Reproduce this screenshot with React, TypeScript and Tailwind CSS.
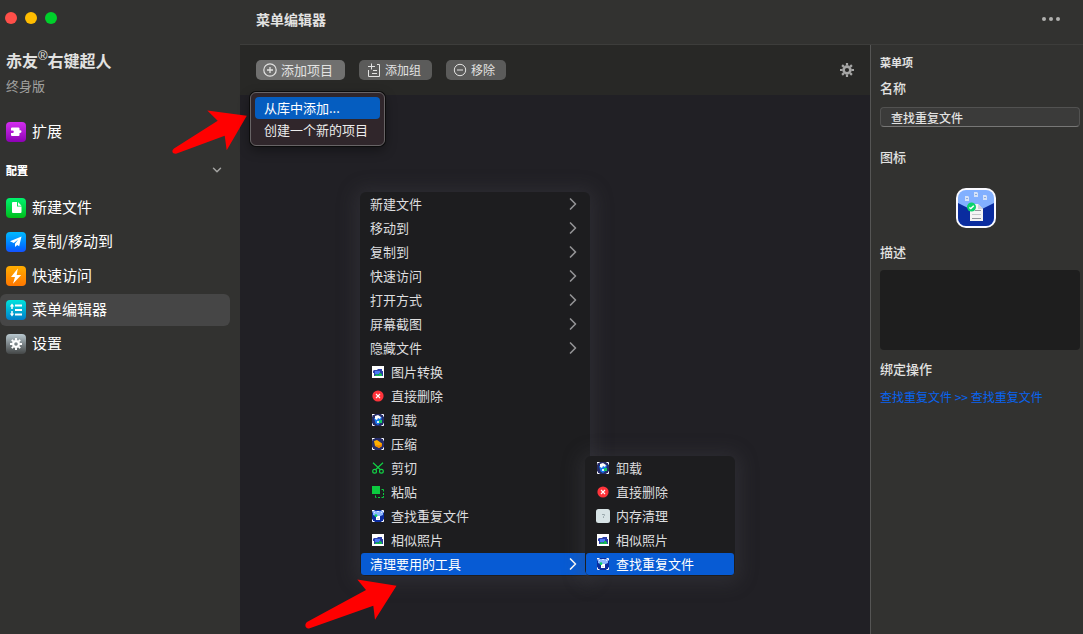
import { ReactNode } from 'react';
import { clsx } from 'clsx';
import { ChevronDown, ChevronRight } from 'lucide-react';

function GearIcon({ className }: { className: string }) {
  return (
    <svg viewBox="0 0 14 14" className={className} fill="none" stroke="currentColor">
      <circle cx="7" cy="7" r="3.4" strokeWidth="2.6" />
      <path
        strokeWidth="2.2"
        d="M7 0v2.6M7 11.4V14M0 7h2.6M11.4 7H14M2.1 2.1l1.8 1.8M10.1 10.1l1.8 1.8M2.1 11.9l1.8-1.8M10.1 3.9l1.8-1.8"
      />
    </svg>
  );
}

function PuzzleIcon() {
  return (
    <svg viewBox="0 0 20 20" className="size-5">
      <path
        fill="#fff"
        d="M6 5.5h6.5a1 1 0 0 1 1 1v1.7h.6a1.4 1.4 0 1 1 0 2.8h-.6v2a1 1 0 0 1-1 1H6a1 1 0 0 1-1-1v-2h1.5a1.2 1.2 0 0 0 0-2.6H5V6.5a1 1 0 0 1 1-1z"
      />
    </svg>
  );
}

function FileIcon() {
  return (
    <svg viewBox="0 0 20 20" className="size-5">
      <path fill="#fff" d="M7 4h4v4.5h4.5V14a1 1 0 0 1-1 1H7a1 1 0 0 1-1-1V5a1 1 0 0 1 1-1z" />
      <path fill="#fff" d="M12 4l3.5 3.7H12z" />
    </svg>
  );
}

function PlaneIcon() {
  return (
    <svg viewBox="0 0 20 20" className="size-5">
      <path fill="#fff" d="M15.5 4.5L4 9.3l3.8 1.6 4.4-3.4-3.2 4.3V15l2.2-2 2 1.2z" />
    </svg>
  );
}

function BoltIcon() {
  return (
    <svg viewBox="0 0 20 20" className="size-5">
      <path fill="#fff" d="M11.8 2.5L5 11h4l-2 6.8L15.2 9h-4.5z" />
    </svg>
  );
}

function ListIcon() {
  return (
    <svg viewBox="0 0 20 20" className="size-5" fill="none" stroke="#fff">
      <path strokeWidth="2" d="M9 5.5h7M9 10h7M9 14.5h7" />
      <path strokeWidth="1.5" d="M6 5v4M6 11v4" />
      <path fill="#fff" stroke="none" d="M6 3.6L8.2 6.6H3.8zM6 16.4l2.2-3H3.8z" />
    </svg>
  );
}

function SparkImage({ children, bg = '#262c68' }: { children: ReactNode; bg?: string }) {
  return (
    <svg viewBox="0 0 12 12" className="size-3">
      <rect width="12" height="12" fill={bg} />
      <path fill="none" stroke="#fff" d="M0 2.5V.5h2.5M9.5.5h2v2M11.5 9.5v2h-2M2.5 11.5h-2v-2" />
      {children}
    </svg>
  );
}

function PhotoIcon() {
  return (
    <svg viewBox="0 0 12 12" className="size-3">
      <rect width="12" height="12" fill="#fff" />
      <path fill="#2c3fa8" d="M1 5l1-1h3l1-1h4v2h1v5H2V7H1z" />
      <path fill="#4a78f5" d="M3 5h5v3H3z" />
      <path fill="#16b957" d="M3 10V9l2-1 2 1V7h2v1h1v2z" />
    </svg>
  );
}

function DeleteIcon() {
  return (
    <svg viewBox="0 0 12 12" className="size-3">
      <circle cx="6" cy="6" r="5.6" fill="#ff343b" />
      <path stroke="#fff" strokeWidth="1.1" d="M4 4l4 4M8 4L4 8" />
    </svg>
  );
}

function UninstallIcon() {
  return (
    <SparkImage>
      <path fill="#1677ee" d="M2 4l8-1-1.5 6L6 11 3.5 9.5z" />
      <path fill="#fff" d="M3 2l3-1 3 2-1 2-2-1-1 2-2-1z" />
      <path fill="#16c965" d="M7 6h3v3H7z" />
      <path fill="#d9f1ff" d="M5 7h2v2H5z" />
    </SparkImage>
  );
}

function ZipIcon() {
  return (
    <SparkImage>
      <path fill="#ffb000" d="M2 3l3-1 5 3.5V8L7 10 3 8z" />
      <path fill="#f28500" d="M3 7l4 3 3-2V6L7 7.5z" />
    </SparkImage>
  );
}

function CutIcon() {
  return (
    <svg viewBox="0 0 12 12" className="size-3" fill="none" stroke="#12cf45" strokeWidth="1.2">
      <path d="M1 .7l7.5 7M11 .7l-7.5 7" />
      <circle cx="2.6" cy="9.2" r="1.9" />
      <circle cx="9.4" cy="9.2" r="1.9" />
    </svg>
  );
}

function PasteIcon() {
  return (
    <svg viewBox="0 0 12 12" className="size-3">
      <rect width="8" height="8" fill="#0ccb3f" />
      <path
        fill="none"
        stroke="#0ccb3f"
        d="M9.5 3.5h2v2M11.5 7v2M11.5 10v1.5h-2M8 11.5H6M4.5 11.5h-1v-2"
      />
    </svg>
  );
}

function DuplicateIcon() {
  return (
    <SparkImage bg="#0b2c9f">
      <path fill="#8bb6ff" d="M1 1h10v4L6 7 1 5z" />
      <path fill="#fff" d="M4 6h4v4H4z" />
      <path fill="#dce8ff" d="M2 2h1v1H2zM5 1h2v1H5zM9 2h1v1H9z" />
      <circle cx="4" cy="5.7" r="1.4" fill="#10d26a" />
      <path fill="#abc" d="M5 8h2v.6H5z" />
    </SparkImage>
  );
}

function MemoryIcon() {
  return (
    <svg viewBox="0 0 14 14" className="-mx-px size-3.5">
      <rect width="14" height="14" rx="2.5" fill="#d7e3e5" />
      <path fill="none" stroke="#9aa9ad" d="M6 5.5h2.5v1L7.5 7.5V9" />
    </svg>
  );
}

function AppIcon() {
  return (
    <svg viewBox="0 0 40 40" className="size-10">
      <defs>
        <clipPath id="app-face">
          <rect x="2" y="2" width="36" height="36" rx="8" />
        </clipPath>
      </defs>
      <rect width="40" height="40" rx="10" fill="#fafaff" />
      <g clipPath="url(#app-face)">
        <rect x="2" y="2" width="36" height="36" fill="#82b0ff" />
        <path fill="#0a2c9f" d="M2 15l18 9 18-9v23H2z" />
        <path fill="#d5e2f8" d="M9 8h3l1 1v4H9zM18 4h3l1 1v4h-4zM27 7h3l1 1v4h-4z" />
        <path fill="#8fabd9" d="M10 10h2v1h-2zM19 6h2v1h-2zM28 9h2v1h-2z" />
        <path fill="#f4f4f4" d="M14 16h8l5 5v12H14z" />
        <path fill="#cfd3da" d="M22 16l5 5h-5z" />
        <path stroke="#8f9399" d="M19 22.5h6M16 30.5h9" />
        <path stroke="#c5c8cc" d="M16 26.5h9" />
        <circle cx="15.5" cy="19" r="4.5" fill="#0bd46c" />
        <path fill="none" stroke="#fff" strokeWidth="1.5" d="M13.3 19.5l1.5 1 3-2.8" />
      </g>
    </svg>
  );
}

function PlusCircleIcon() {
  return (
    <svg viewBox="0 0 14 14" className="size-3.5" fill="none" stroke="currentColor">
      <circle cx="7" cy="7" r="6.2" strokeWidth="1.2" />
      <path strokeWidth="1.3" d="M7 4v6M4 7h6" />
    </svg>
  );
}

function MinusCircleIcon() {
  return (
    <svg viewBox="0 0 14 14" className="size-3.5" fill="none" stroke="currentColor">
      <circle cx="7" cy="7" r="5.7" />
      <path d="M4 7h6" />
    </svg>
  );
}

function AddGroupIcon() {
  return (
    <svg viewBox="0 0 14 14" className="size-3.5" fill="none" stroke="currentColor">
      <path d="M4.5.5v6M1 3.5h7M1.5 7v6.5h11v-12H10" />
      <path d="M6 7.5h4M5 10.5h5" />
    </svg>
  );
}

const NAV = [
  { label: '新建文件', icon: <FileIcon />, color: 'from-[#00f36d] to-[#00bd13]' },
  { label: '复制/移动到', icon: <PlaneIcon />, color: 'from-[#00baff] to-[#1551ff]' },
  { label: '快速访问', icon: <BoltIcon />, color: 'from-[#ffad00] to-[#ff7600]' },
  { label: '菜单编辑器', icon: <ListIcon />, color: 'from-[#00e3dc] to-[#007dc8]', active: true },
  {
    label: '设置',
    icon: <GearIcon className="size-3 text-white" />,
    color: 'from-[#b9c9d0] to-[#444747]',
  },
];

type Entry = { label: string; icon?: ReactNode; sub?: boolean; active?: boolean };

const MENU: Entry[] = [
  { label: '新建文件', sub: true },
  { label: '移动到', sub: true },
  { label: '复制到', sub: true },
  { label: '快速访问', sub: true },
  { label: '打开方式', sub: true },
  { label: '屏幕截图', sub: true },
  { label: '隐藏文件', sub: true },
  { label: '图片转换', icon: <PhotoIcon /> },
  { label: '直接删除', icon: <DeleteIcon /> },
  { label: '卸载', icon: <UninstallIcon /> },
  { label: '压缩', icon: <ZipIcon /> },
  { label: '剪切', icon: <CutIcon /> },
  { label: '粘贴', icon: <PasteIcon /> },
  { label: '查找重复文件', icon: <DuplicateIcon /> },
  { label: '相似照片', icon: <PhotoIcon /> },
  { label: '清理要用的工具', sub: true, active: true },
];

const SUBMENU: Entry[] = [
  { label: '卸载', icon: <UninstallIcon /> },
  { label: '直接删除', icon: <DeleteIcon /> },
  { label: '内存清理', icon: <MemoryIcon /> },
  { label: '相似照片', icon: <PhotoIcon /> },
  { label: '查找重复文件', icon: <DuplicateIcon />, active: true },
];

function NavItem({ label, icon, color, active }: { label: string; icon: ReactNode; color: string; active?: boolean }) {
  return (
    <button
      className={clsx(
        'flex h-8 w-full items-center gap-1.5 rounded-md pb-px pl-1.5 text-left text-[15px] text-white',
        active && 'bg-[#464646]'
      )}
    >
      <span className={clsx('flex size-5 items-center justify-center rounded bg-linear-to-b', color)}>{icon}</span>
      {label}
    </button>
  );
}

function Menu({ items, className }: { items: Entry[]; className: string }) {
  return (
    <ul className={clsx('rounded-md bg-[#1d1d1f] shadow-[0_2px_18px_6px_rgba(80,80,88,0.25)]', className)}>
      {items.map((item) => (
        <li key={item.label} className="px-px py-px">
          <button
            className={clsx(
              'flex h-[22px] w-full items-center gap-[7px] rounded-[3px] pr-3 text-left text-[13px]',
              item.icon ? 'pl-[11px]' : 'pl-[9px]',
              item.active ? 'bg-[#075bd4] text-white' : 'text-[#dededf]'
            )}
          >
            {item.icon}
            <span className="flex-1">{item.label}</span>
            {item.sub && (
              <ChevronRight
                className={clsx('-mr-1.5 size-5', item.active ? 'text-white' : 'text-[#929294]')}
                strokeWidth={2}
              />
            )}
          </button>
        </li>
      ))}
    </ul>
  );
}

export default function App() {
  return (
    <div className="relative flex min-h-screen overflow-hidden bg-[#323230] font-['Noto_Sans_CJK_SC',sans-serif] text-[#e2e2e1]">
      <aside className="w-60 shrink-0">
        <div className="flex gap-2 px-[5px] pt-3">
          <span className="size-3 rounded-full bg-[#ff4f49]" />
          <span className="size-3 rounded-full bg-[#ffbd00]" />
          <span className="size-3 rounded-full bg-[#00d02b]" />
        </div>
        <h1 className="mt-6 flex pl-1.5 text-base leading-6 font-bold">
          赤友<span className="-mt-1 font-['Liberation_Sans',sans-serif] text-[13px] font-normal">®</span>右键超人
        </h1>
        <p className="mt-1 pl-1.5 text-[13px] leading-5 text-[#a2a2a0]">终身版</p>
        <div className="mt-5 pr-2.5">
          <NavItem label="扩展" icon={<PuzzleIcon />} color="from-[#d32cf0] to-[#8e00b5]" />
        </div>
        <div className="mt-3 flex h-5 items-center justify-between pr-4 pl-1.5">
          <h2 className="text-[11px] font-black text-white">配置</h2>
          <ChevronDown className="size-3.5 text-[#a4a4a2]" strokeWidth={2.5} />
        </div>
        <nav className="mt-3 flex flex-col gap-0.5 pr-2.5">
          {NAV.map((item) => (
            <NavItem key={item.label} {...item} />
          ))}
        </nav>
      </aside>

      <div className="flex min-w-0 flex-1 flex-col">
        <header className="flex h-[45px] items-center justify-between border-b border-[#3d3d3b] pr-[23px] pb-1.5 pl-4">
          <h2 className="text-sm font-bold">菜单编辑器</h2>
          <button aria-label="更多" className="flex gap-[3px]">
            <span className="size-1 rounded-full bg-[#b0b0ae]" />
            <span className="size-1 rounded-full bg-[#b0b0ae]" />
            <span className="size-1 rounded-full bg-[#b0b0ae]" />
          </button>
        </header>

        <div className="flex flex-1">
          <main className="flex min-w-0 flex-1 flex-col bg-[#212025]">
            <div className="flex h-[50px] items-center bg-[#282826] px-4">
              <div className="relative">
                <button className="flex h-5 items-center gap-1 rounded-[5px] bg-[#70706f] pr-3 pl-[7px] text-[13px]">
                  <PlusCircleIcon />
                  添加项目
                </button>
                <ul className="absolute top-8 -left-1.5 z-10 w-[135px] rounded-md border border-[#686466] bg-[#30262b] p-1 text-[13px] text-[#ececec] shadow-[0_0_0_1px_#0c0c0c,0_4px_12px_rgba(0,0,0,0.4)]">
                  <li>
                    <button className="h-[22px] w-full rounded bg-[#055dc0] pl-[9px] text-left text-white">
                      从库中添加...
                    </button>
                  </li>
                  <li>
                    <button className="h-[22px] w-full pl-[9px] text-left">创建一个新的项目</button>
                  </li>
                </ul>
              </div>
              <button className="ml-3.5 flex h-5 items-center gap-1 rounded-[5px] bg-[#5b5b5a] px-2 pr-[11px] text-xs">
                <AddGroupIcon />
                添加组
              </button>
              <button className="ml-3.5 flex h-5 items-center gap-1 rounded-[5px] bg-[#5b5b5a] pr-[11px] pl-[7px] text-xs">
                <MinusCircleIcon />
                移除
              </button>
              <button aria-label="设置" className="ml-auto text-[#a6a6a5]">
                <GearIcon className="size-3.5" />
              </button>
            </div>
            <div className="flex items-end self-start pt-[97px] pl-[120px]">
              <Menu items={MENU} className="w-[230px]" />
              <Menu items={SUBMENU} className="z-1 -ml-[5px] w-[150px]" />
            </div>
          </main>

          <section className="flex w-[213px] shrink-0 flex-col border-l border-[#555554] pr-[3px] pl-[9px] text-[13px] leading-5 font-medium">
            <h3 className="mt-[7px] text-[11px] font-bold">菜单项</h3>
            <label htmlFor="name" className="mt-1.5">
              名称
            </label>
            <input
              id="name"
              defaultValue="查找重复文件"
              className="mt-[9px] h-5 w-full rounded border border-[#525251] border-b-[#777776] bg-[#3b3b3a] px-2.5 text-xs outline-none"
            />
            <h3 className="mt-5">图标</h3>
            <div className="mt-[21px] flex justify-center pr-2">
              <AppIcon />
            </div>
            <label htmlFor="desc" className="mt-3.5">
              描述
            </label>
            <textarea id="desc" className="mt-2 h-20 w-full resize-none rounded bg-[#1e1e1e] p-2 outline-none" />
            <h3 className="mt-[9px]">绑定操作</h3>
            <a href="#" className="mt-2 text-xs leading-5 font-normal text-[#0864f0]">
              查找重复文件 &gt;&gt; 查找重复文件
            </a>
          </section>
        </div>
      </div>

      <svg viewBox="0 0 76 46" className="pointer-events-none absolute top-[108px] left-[171px] h-[46px] w-[76px]">
        <path fill="#f00" d="M3 40.5L46.7 12.7 36.3 2.5 75.8 7.7 55.7 42.3 53.7 27.7 5 45.7C1.5 46 0 43 3 40.5z" />
      </svg>
      <svg viewBox="0 0 93 50" className="pointer-events-none absolute top-[579px] left-[304px] h-[50px] w-[93px]">
        <path fill="#f00" d="M3 43L62 11 53.3 .5 92.5 6.7 71 40.7 69.3 26.7 5 49.5C1.5 50 0 45.5 3 43z" />
      </svg>
    </div>
  );
}
